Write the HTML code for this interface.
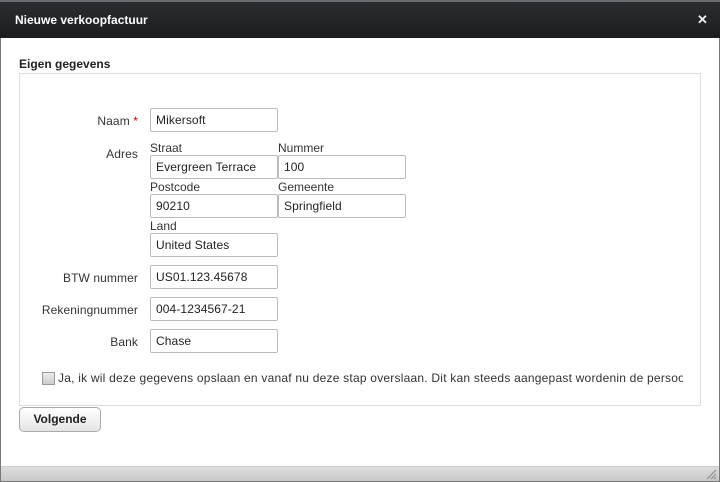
<!DOCTYPE html>
<html><head><style>
*{margin:0;padding:0;box-sizing:border-box}
body{width:720px;height:482px;background:#fff;font-family:"Liberation Sans",sans-serif;font-size:12px;color:#333;position:relative;overflow:hidden}
.frame{position:absolute;left:0;top:0;width:720px;height:482px;border:1px solid #777;border-top:0}
.title{position:absolute;left:0;top:0;width:720px;height:38px;background:linear-gradient(#2a2e31,#1b1d1f);border-top:2px solid #6a6d70}
.title span{position:absolute;left:15px;top:11px;color:#fff;font-weight:bold;font-size:12px}
.title b{position:absolute;left:697px;top:10px;color:#eee;font-size:13px}
.abs{position:absolute}
.box{position:absolute;left:19px;top:73px;width:682px;height:333px;border:1px solid #ddd}
.in{position:absolute;height:24px;border:1px solid #bbb;border-radius:2px;padding:4px 5px;font-size:12px;color:#222;background:#fff;letter-spacing:0.1px}
.lab{position:absolute;text-align:right;width:120px;left:18px;letter-spacing:0.1px}
.sub{position:absolute}
.btn{position:absolute;left:19px;top:407px;width:82px;height:25px;border:1px solid #aaa;border-radius:5px;background:linear-gradient(#fff,#e4e4e4);font-weight:bold;text-align:center;line-height:23px;color:#222}
.foot{position:absolute;left:1px;top:466px;width:718px;height:15px;background:linear-gradient(#ddd,#c8c8c8);border-top:1px solid #ccc}
</style></head><body>
<div class="frame"></div>
<div class="title"><span>Nieuwe verkoopfactuur</span><b>✕</b></div>
<div class="abs" style="left:19px;top:57px;font-weight:bold;color:#222">Eigen gegevens</div>
<div class="box"></div>
<div class="lab" style="top:114px">Naam <span style="color:#c00">*</span></div>
<div class="in" style="left:150px;top:108px;width:128px">Mikersoft</div>
<div class="lab" style="top:147px">Adres</div>
<div class="sub" style="left:150px;top:141px">Straat</div>
<div class="sub" style="left:278px;top:141px">Nummer</div>
<div class="in" style="left:150px;top:155px;width:128px">Evergreen Terrace</div>
<div class="in" style="left:278px;top:155px;width:128px">100</div>
<div class="sub" style="left:150px;top:180px">Postcode</div>
<div class="sub" style="left:278px;top:180px">Gemeente</div>
<div class="in" style="left:150px;top:194px;width:128px">90210</div>
<div class="in" style="left:278px;top:194px;width:128px">Springfield</div>
<div class="sub" style="left:150px;top:219px">Land</div>
<div class="in" style="left:150px;top:233px;width:128px">United States</div>
<div class="lab" style="top:271px">BTW nummer</div>
<div class="in" style="left:150px;top:265px;width:128px">US01.123.45678</div>
<div class="lab" style="top:303px">Rekeningnummer</div>
<div class="in" style="left:150px;top:297px;width:128px">004-1234567-21</div>
<div class="lab" style="top:335px">Bank</div>
<div class="in" style="left:150px;top:329px;width:128px">Chase</div>
<div class="abs" style="left:42px;top:372px;width:13px;height:13px;border:1px solid #999;background:linear-gradient(#eee,#ccc)"></div>
<div class="abs" style="left:58px;top:371px;white-space:nowrap;width:625px;overflow:hidden;letter-spacing:0.22px">Ja, ik wil deze gegevens opslaan en vanaf nu deze stap overslaan. Dit kan steeds aangepast wordenin de persoonlijke instellingen.</div>
<div class="btn">Volgende</div>
<div class="foot"></div>
<svg class="abs" style="left:705px;top:468px" width="12" height="12"><path d="M2 11L11 2M6 11L11 6M9 11L11 9" stroke="#888" stroke-width="1"/></svg>
</body></html>
